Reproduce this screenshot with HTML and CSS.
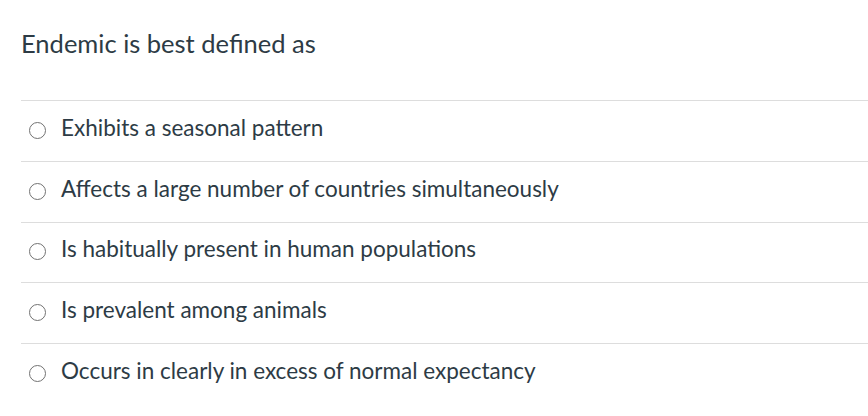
FILE: index.html
```html
<!DOCTYPE html>
<html>
<head>
<meta charset="utf-8">
<link rel="stylesheet" href="styles.css">
</head>
<body>
<div class="question">
  <div class="question-text">Endemic is best defined as</div>
  <div class="answers">
    <label class="answer"><span class="radio"></span><span class="answer-text">Exhibits a seasonal pattern</span></label>
    <label class="answer"><span class="radio"></span><span class="answer-text">Affects a large number of countries simultaneously</span></label>
    <label class="answer"><span class="radio"></span><span class="answer-text">Is habitually present in human populations</span></label>
    <label class="answer"><span class="radio"></span><span class="answer-text">Is prevalent among animals</span></label>
    <label class="answer"><span class="radio"></span><span class="answer-text">Occurs in clearly in excess of normal expectancy</span></label>
  </div>
</div>
</body>
</html>
```
FILE: styles.css
```css
html, body {
  margin: 0;
  padding: 0;
  background: #fff;
}
body {
  font-family: Lato, "Open Sans", sans-serif;
  color: #2d3b45;
}
.question {
  padding: 28px 0 0 21px;
}
.question-text {
  font-size: 25.5px;
  line-height: 30px;
  height: 72px;
}
.answers {
  display: flex;
  flex-direction: column;
}
.answer {
  display: flex;
  align-items: center;
  height: 59.75px;
  border-top: 1px solid #dddddd;
  padding-left: 8px;
  gap: 15px;
}
.radio {
  width: 15px;
  height: 15px;
  border: 1.5px solid #727272;
  border-radius: 50%;
  flex: none;
  box-sizing: content-box;
  margin-bottom: 1px;
}
.answer-text {
  font-size: 22.5px;
  line-height: 24px;
  margin-bottom: 6px;
}
```
